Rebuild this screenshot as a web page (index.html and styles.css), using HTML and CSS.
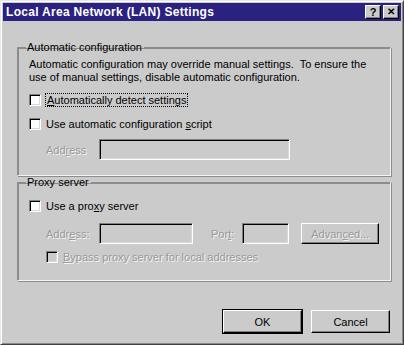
FILE: index.html
```html
<!DOCTYPE html>
<html>
  <head>
    <link rel="stylesheet" href="styles.css">
  </head>
  <body>
    <div class="window">
      <div class="titlebar">
        <span class="title">Local Area Network (LAN) Settings</span>
        <div class="title-buttons">
          <div class="tbtn">?</div>
          <div class="tbtn close">&#x2715;</div>
        </div>
      </div>

      <div class="content">
        <fieldset class="group auto">
          <legend>Automatic configuration</legend>
          <p class="info">Automatic configuration may override manual settings.&nbsp; To ensure the use of manual settings, disable automatic configuration.</p>
          <div class="check first">
            <span class="box"></span>
            <span class="focus"><u>A</u>utomatically detect settings</span>
          </div>
          <div class="check">
            <span class="box"></span>
            <span>Use automatic configuration <u>s</u>cript</span>
          </div>
          <div class="field-row indent">
            <span class="label disabled">Add<u>r</u>ess</span>
            <span class="input wide"></span>
          </div>
        </fieldset>

        <fieldset class="group proxy">
          <legend>Proxy server</legend>
          <div class="check first">
            <span class="box"></span>
            <span>Use a pro<u>x</u>y server</span>
          </div>
          <div class="field-row indent">
            <span class="label disabled">Addr<u>e</u>ss:</span>
            <span class="input addr"></span>
            <span class="label disabled port">Por<u>t</u>:</span>
            <span class="input port-box"></span>
            <span class="button disabled adv">Advan<u>c</u>ed...</span>
          </div>
          <div class="check indent bypass">
            <span class="box gray"></span>
            <span class="disabled"><u>B</u>ypass proxy server for local addresses</span>
          </div>
        </fieldset>

        <div class="actions">
          <span class="button default">OK</span>
          <span class="button">Cancel</span>
        </div>
      </div>
    </div>
  </body>
</html>
```

FILE: styles.css
```css
body {
  margin: 0;
  background: #fff;
  font-family: "Liberation Sans", Arial, sans-serif;
  font-size: 11px;
  color: #000;
}

.window {
  width: 404px;
  height: 345px;
  box-sizing: border-box;
  background: #cbcbcb;
  border-top: 1px solid #e8e8e8;
  border-left: 1px solid #e8e8e8;
  border-right: 1px solid #404040;
  border-bottom: 1px solid #404040;
  box-shadow: inset 1px 1px 0 #fff, inset -1px -1px 0 #888;
  padding: 2px;
}

.titlebar {
  height: 18px;
  background: #2b2180;
  color: #fff;
  display: flex;
  align-items: center;
  justify-content: space-between;
  padding: 0 2px 0 3px;
}

.title {
  font-weight: bold;
  font-size: 12px;
  letter-spacing: 0.3px;
}

.title-buttons {
  display: flex;
  gap: 2px;
}

.tbtn {
  width: 16px;
  height: 14px;
  box-sizing: border-box;
  background: #cbcbcb;
  color: #000;
  font-weight: bold;
  font-size: 11px;
  line-height: 12px;
  text-align: center;
  border-top: 1px solid #fff;
  border-left: 1px solid #fff;
  border-right: 1px solid #000;
  border-bottom: 1px solid #000;
  box-shadow: inset -1px -1px 0 #808080;
}

.tbtn.close {
  font-size: 10px;
}

.content {
  padding: 20px 10px 0 14px;
}

.group {
  margin: 0;
  padding: 0 10px 0 11px;
  border: 1px solid #f4f4f4;
  box-shadow: inset 1px 1px 0 #8c8c8c, 1px 1px 0 #8c8c8c;
  border-top-color: #8c8c8c;
  border-left-color: #8c8c8c;
}

.group legend {
  padding: 0 2px 0 1px;
  margin-left: -3px;
  line-height: 13px;
}

.auto {
  height: 133px;
}

.proxy {
  margin-top: 0;
  height: 103px;
}

.info {
  margin: 4px 0 0;
  line-height: 13px;
}

.check {
  display: flex;
  align-items: center;
  gap: 5px;
  margin-top: 11px;
  height: 13px;
}

.check.first {
  margin-top: 9px;
}

.proxy .check.first {
  margin-top: 10px;
}

.box {
  width: 12px;
  height: 12px;
  box-sizing: border-box;
  background: #fff;
  border-top: 1px solid #808080;
  border-left: 1px solid #808080;
  border-right: 1px solid #fff;
  border-bottom: 1px solid #fff;
  box-shadow: inset 1px 1px 0 #000, inset -1px -1px 0 #d8d8d8;
}

.box.gray {
  background: #cbcbcb;
}

.focus {
  outline: 1px dotted #000;
  padding: 0 1px;
}

.field-row {
  display: flex;
  align-items: center;
  margin-top: 11px;
}

.auto .field-row {
  margin-top: 9px;
}

.indent {
  padding-left: 17px;
}

.label {
  width: 53px;
}

.label.port {
  width: auto;
  margin: 0 8px 0 18px;
}

.disabled {
  color: #999;
  text-shadow: 1px 1px 0 #f4f4f4;
}

.input {
  height: 21px;
  box-sizing: border-box;
  border-top: 1px solid #808080;
  border-left: 1px solid #808080;
  border-right: 1px solid #fff;
  border-bottom: 1px solid #fff;
  box-shadow: inset 1px 1px 0 #000, inset -1px -1px 0 #d8d8d8;
  background: #cbcbcb;
}

.input.wide {
  width: 191px;
}

.input.addr {
  width: 94px;
}

.input.port-box {
  width: 47px;
}

.button {
  display: inline-flex;
  align-items: center;
  justify-content: center;
  height: 23px;
  box-sizing: border-box;
  width: 79px;
  background: #cbcbcb;
  border-top: 1px solid #fff;
  border-left: 1px solid #fff;
  border-right: 1px solid #000;
  border-bottom: 1px solid #000;
  box-shadow: inset -1px -1px 0 #808080;
}

.button.adv {
  width: 78px;
  height: 21px;
  margin-left: 12px;
}

.button.default {
  outline: 1px solid #000;
  outline-offset: 0;
}

.bypass {
  margin-top: 6px;
}

.actions {
  display: flex;
  justify-content: flex-end;
  gap: 9px;
  margin-top: 29px;
  padding-right: 1px;
}
```
